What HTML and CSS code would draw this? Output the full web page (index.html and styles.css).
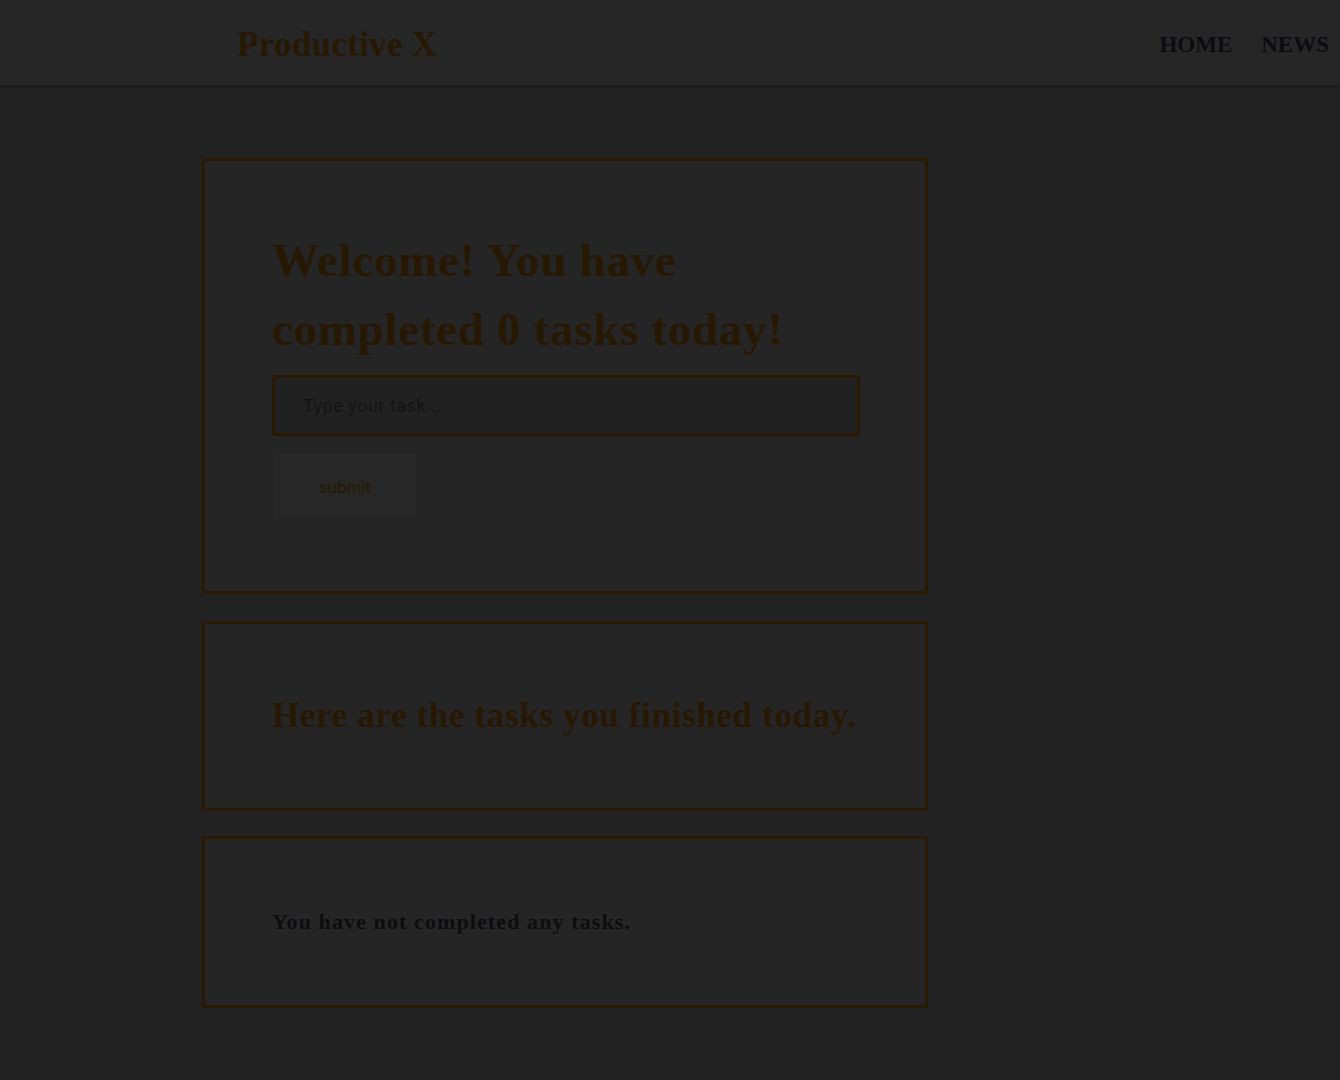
FILE: index.html
```html
<!DOCTYPE html>
<html>
<head>
<meta charset="utf-8">
<title>Productive X</title>
<link rel="stylesheet" href="styles.css">
</head>
<body>
<header class="topbar">
  <div class="logo">Productive X</div>
  <nav class="nav">
    <a class="nav-link" href="#">HOME</a>
    <a class="nav-link" href="#">NEWS</a>
  </nav>
</header>
<main class="content">
  <section class="card card-welcome">
    <h1 class="welcome">Welcome! You have completed 0 tasks today!</h1>
    <div class="task-input"><span class="placeholder">Type your task...</span></div>
    <button class="submit">submit</button>
  </section>
  <section class="card card-finished">
    <h2 class="finished">Here are the tasks you finished today.</h2>
  </section>
  <section class="card card-empty">
    <p class="empty">You have not completed any tasks.</p>
  </section>
</main>
</body>
</html>
```
FILE: styles.css
```css
html, body {
  margin: 0;
  padding: 0;
  background: #222222;
}
body {
  font-family: "Liberation Serif", "DejaVu Serif", serif;
  min-height: 1080px;
}
.topbar {
  height: 85px;
  background: #262626;
  box-shadow: 0 2px 4px rgba(0,0,0,0.25);
  display: flex;
  align-items: center;
  justify-content: space-between;
}
.logo {
  margin-left: 237px;
  margin-top: 4px;
  font-size: 35px;
  font-weight: bold;
  color: #271803;
  letter-spacing: 0.3px;
}
.nav {
  display: flex;
  gap: 29px;
  margin-right: 11px;
  margin-top: 4px;
}
.nav-link {
  color: #0c0c10;
  text-decoration: none;
  font-weight: bold;
  font-size: 23px;
}
.content {
  margin-left: 202px;
  width: 726px;
  padding-top: 73px;
  display: flex;
  flex-direction: column;
}
.card {
  border: 3px solid #281a04;
  background: #252525;
  padding: 0 65px 0 67px;
}
.card-welcome {
  padding-top: 65px;
  padding-bottom: 72px;
}
.welcome {
  margin: 0;
  font-size: 47px;
  line-height: 69px;
  letter-spacing: 0.7px;
  color: #271803;
  font-weight: bold;
}
.task-input {
  margin-top: 11px;
  height: 55px;
  border: 3px solid #281a04;
  background: #212121;
  display: flex;
  align-items: center;
  padding-left: 28px;
}
.placeholder {
  font-family: Roboto, "Liberation Sans", sans-serif;
  font-size: 18px;
  letter-spacing: 0.5px;
  color: #141416;
}
.submit {
  display: block;
  margin: 18px 0 0 2px;
  width: 142px;
  height: 65px;
  border: none;
  background: #272727;
  color: #271803;
  font-family: Roboto, "Liberation Sans", sans-serif;
  font-size: 17px;
}
.card-finished {
  margin-top: 27px;
  height: 184px;
  display: flex;
  align-items: center;
}
.finished {
  margin: 0;
  font-size: 35px;
  letter-spacing: 0.65px;
  white-space: nowrap;
  color: #271803;
  font-weight: bold;
}
.card-empty {
  margin-top: 25px;
  height: 166px;
  display: flex;
  align-items: center;
}
.empty {
  margin: 0;
  font-size: 22px;
  letter-spacing: 1.1px;
  font-weight: bold;
  color: #0d0d10;
}
```
